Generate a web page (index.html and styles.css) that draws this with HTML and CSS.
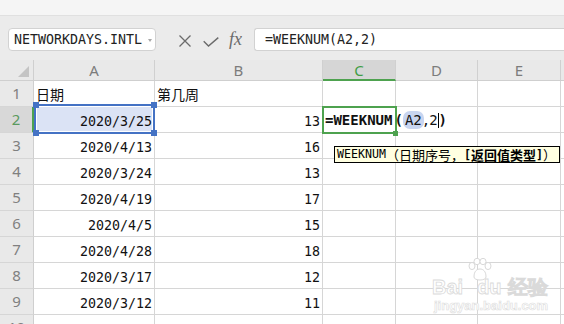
FILE: index.html
```html
<!DOCTYPE html>
<html>
<head>
<meta charset="utf-8">
<link rel="stylesheet" href="styles.css">
</head>
<body>
<div class="app">
  <div class="topband"></div>
  <div class="fbar">
    <div class="namebox"><span>NETWORKDAYS.INTL</span><span class="caret"></span></div>
    <svg class="ico-x" width="12" height="12" viewBox="0 0 12 12"><path d="M0.5 0.5 L11.5 11.5 M11.5 0.5 L0.5 11.5" stroke="#6b6b6b" stroke-width="1.3" fill="none"/></svg>
    <svg class="ico-ok" width="16" height="10" viewBox="0 0 16 10"><path d="M0.7 4.3 L5.5 9 L15.3 0.6" stroke="#6b6b6b" stroke-width="1.4" fill="none"/></svg>
    <span class="fx">fx</span>
    <div class="finput">=WEEKNUM(A2,2)</div>
  </div>
  <div class="sheet">
    <div class="corner"><svg width="34" height="20" viewBox="0 0 34 20"><path d="M29 6 L29 17 L18 17 Z" fill="#c4c4c4"/></svg></div>
    <div class="ch">A</div><div class="ch">B</div><div class="ch ch-act">C</div><div class="ch">D</div><div class="ch">E</div><div class="ch end"></div>

    <div class="rh">1</div><div class="c txt">日期</div><div class="c txt">第几周</div><div class="c"></div><div class="c"></div><div class="c"></div><div class="c end"></div>

    <div class="rh rh-act">2</div>
    <div class="c num selcell">2020/3/25<div class="sel"><i class="h tl"></i><i class="h tr"></i><i class="h bl"></i><i class="h br"></i></div></div>
    <div class="c num">13</div>
    <div class="c edcell">
      <div class="editor"><b>=WEEKNUM</b><b class="par">(</b><span class="ref">A2</span><span class="cm">,</span>2<span class="cursor"></span><b>)</b><i class="eh"></i></div>
      <div class="tip"><span class="lt">WEEKNUM</span><span class="cj">（日期序号，</span><b class="lt">[</b><b class="cj">返回值类型</b><b class="lt">]</b><span class="cj">）</span></div>
    </div>
    <div class="c"></div><div class="c"></div><div class="c end"></div>

    <div class="rh">3</div><div class="c num">2020/4/13</div><div class="c num">16</div><div class="c"></div><div class="c"></div><div class="c"></div><div class="c end"></div>
    <div class="rh">4</div><div class="c num">2020/3/24</div><div class="c num">13</div><div class="c"></div><div class="c"></div><div class="c"></div><div class="c end"></div>
    <div class="rh">5</div><div class="c num">2020/4/19</div><div class="c num">17</div><div class="c"></div><div class="c"></div><div class="c"></div><div class="c end"></div>
    <div class="rh">6</div><div class="c num">2020/4/5</div><div class="c num">15</div><div class="c"></div><div class="c"></div><div class="c"></div><div class="c end"></div>
    <div class="rh">7</div><div class="c num">2020/4/28</div><div class="c num">18</div><div class="c"></div><div class="c"></div><div class="c"></div><div class="c end"></div>
    <div class="rh">8</div><div class="c num">2020/3/17</div><div class="c num">12</div><div class="c"></div><div class="c"></div><div class="c"></div><div class="c end"></div>
    <div class="rh">9</div><div class="c num">2020/3/12</div><div class="c num">11</div><div class="c"></div><div class="c"></div><div class="c"></div><div class="c end"></div>
    <div class="rh">10</div><div class="c num">2020/4/14</div><div class="c num"></div><div class="c"></div><div class="c"></div><div class="c"></div><div class="c end"></div>
  </div>
  <div class="wm">
    <svg class="paw" width="26" height="24" viewBox="0 0 26 24"><g fill="#fff" stroke="#d9d9d9" stroke-width="1"><ellipse cx="6" cy="8" rx="3" ry="3.6"/><ellipse cx="11" cy="3.5" rx="3" ry="3.2"/><ellipse cx="17" cy="3.5" rx="3" ry="3.2"/><ellipse cx="22" cy="8" rx="3" ry="3.6"/><path d="M8 19 C8 13 11 11 14 11 C17 11 20 13 20 19 C20 23 8 23 8 19 Z"/></g></svg>
    <div class="wm1">Bai<span class="du">du</span>经验</div>
    <div class="wm2">jingyan.baidu.com</div>
  </div>
</div>
</body>
</html>
```

FILE: styles.css
```css
html, body {
  margin: 0;
  padding: 0;
  background: #ffffff;
}
.app {
  position: relative;
  width: 564px;
  height: 324px;
  overflow: hidden;
  background: #ffffff;
}
.topband {
  height: 15px;
  background: #f5f5f5;
  border-bottom: 1px solid #e0e0e0;
}
.fbar {
  height: 44px;
  box-sizing: border-box;
  padding: 12px 0 0 8px;
  background: #ebebeb;
  display: flex;
  align-items: flex-start;
}
.namebox {
  width: 148px;
  height: 23px;
  box-sizing: border-box;
  border: 1px solid #d2d2d2;
  border-radius: 4px;
  background: #ffffff;
  display: flex;
  align-items: center;
  padding-left: 5px;
  font-family: "DejaVu Sans Mono", "Liberation Mono", monospace;
  font-size: 13.3px;
  color: #222;
  position: relative;
}
.caret {
  position: absolute;
  right: 3px;
  top: 10px;
  width: 0;
  height: 0;
  border-left: 2.5px solid transparent;
  border-right: 2.5px solid transparent;
  border-top: 3px solid #a8a8a8;
}
.ico-x {
  margin: 7px 0 0 23px;
}
.ico-ok {
  margin: 9px 0 0 12px;
}
.fx {
  margin: 3px 0 0 10px;
  font-family: "Liberation Serif", serif;
  font-style: italic;
  font-size: 18px;
  line-height: 16px;
  color: #6b6b6b;
  width: 16px;
}
.finput {
  margin-left: 9px;
  flex: 1;
  height: 23px;
  box-sizing: border-box;
  border: 1px solid #d2d2d2;
  border-right: none;
  border-radius: 3px 0 0 3px;
  background: #ffffff;
  padding-left: 10px;
  font-family: "DejaVu Sans Mono", "Liberation Mono", monospace;
  font-size: 13.3px;
  line-height: 21px;
  color: #222;
}
.sheet {
  display: grid;
  grid-template-columns: 34px 121px 168px 73px 82px 83px 1fr;
  grid-template-rows: 21px repeat(10, 26px);
}
.sheet > div {
  box-sizing: border-box;
}
.corner {
  background: #e9e9e9;
  border-right: 1px solid #cfcfcf;
  border-bottom: 1px solid #cfcfcf;
}
.corner svg { display: block; }
.ch {
  background: #e9e9e9;
  border-right: 1px solid #d0d0d0;
  border-bottom: 1px solid #cfcfcf;
  text-align: center;
  font-family: "Noto Sans", "DejaVu Sans", sans-serif;
  font-size: 15px;
  line-height: 20px;
  color: #7c7c7c;
}
.ch.end { border-right: none; }
.ch-act {
  background: #d6d6d6;
  color: #3f9d45;
  border-bottom: 2px solid #4ea24f;
}
.rh {
  background: #e9e9e9;
  border-right: 1px solid #cfcfcf;
  border-bottom: 1px solid #d6d6d6;
  text-align: center;
  font-family: "Noto Sans", "DejaVu Sans", sans-serif;
  font-size: 15px;
  line-height: 25px;
  color: #808080;
}
.rh-act {
  background: #d8d8d8;
  color: #5a9a5e;
  border-right: 2px solid #4ea24f;
}
.c {
  background: #ffffff;
  border-right: 1px solid #d6d6d6;
  border-bottom: 1px solid #d6d6d6;
  font-family: "DejaVu Sans Mono", "Liberation Mono", monospace;
  font-size: 13.3px;
  line-height: 27px;
  color: #111;
  white-space: nowrap;
}
.c.end { border-right: none; }
.num {
  text-align: right;
  padding-right: 2px;
  padding-top: 1px;
}
.txt {
  font-family: "Noto Sans CJK SC", sans-serif;
  font-size: 14px;
  line-height: 26px;
  padding-left: 2px;
}
.selcell {
  position: relative;
  background: #dbe3f5;
}
.sel {
  position: absolute;
  left: 0;
  top: -3px;
  right: -1px;
  bottom: -2px;
  border: 2px solid #4472c4;
  box-shadow: inset 0 0 0 1px #ffffff;
}
.h {
  position: absolute;
  width: 6px;
  height: 6px;
  background: #4472c4;
}
.h.tl { left: -3px; top: -4px; }
.h.tr { right: -4px; top: -4px; }
.h.bl { left: -3px; bottom: -4px; }
.h.br { right: -4px; bottom: -4px; }
.edcell {
  position: relative;
  z-index: 3;
}
.editor {
  position: absolute;
  left: -1px;
  top: -1px;
  width: 75px;
  height: 28px;
  box-sizing: border-box;
  border: 2px solid #4ea24f;
  padding-left: 1px;
  white-space: nowrap;
  font-family: "DejaVu Sans Mono", "Liberation Mono", monospace;
  font-size: 14px;
  line-height: 25px;
  color: #111;
}
.editor b { font-weight: bold; }
.par { margin: 0 0 0 2px; }
.ref {
  background: #c8d5f0;
  border-radius: 7px;
  padding: 1px 2px;
  margin-left: 0;
}
.cm { margin: 0 -1px 0 -2px; }
.cursor {
  display: inline-block;
  width: 1px;
  height: 15px;
  background: #000;
  vertical-align: -3px;
}
.eh {
  position: absolute;
  right: -3px;
  bottom: -4px;
  width: 5px;
  height: 5px;
  background: #4ea24f;
}
.tip {
  position: absolute;
  left: 11px;
  top: 39px;
  width: 226px;
  height: 17px;
  box-sizing: border-box;
  border: 1px solid #000;
  background: #ffffe1;
  padding: 0 0 0 2px;
  white-space: nowrap;
  display: flex;
  align-items: center;
  color: #000;
}
.tip .lt {
  font-family: "DejaVu Sans Mono", monospace;
  font-size: 11.6px;
  line-height: 15px;
}
.tip .cj {
  font-family: "Noto Sans CJK SC", sans-serif;
  font-size: 13px;
  line-height: 15px;
}
.tip b { font-weight: bold; }
.wm {
  position: absolute;
  left: 430px;
  top: 258px;
  width: 110px;
  pointer-events: none;
}
.paw {
  position: absolute;
  left: 36px;
  top: 0;
}
.wm1 {
  position: absolute;
  left: 2px;
  top: 16px;
  font-family: "Liberation Sans", sans-serif;
  font-weight: bold;
  font-size: 20px;
  color: #ffffff;
  -webkit-text-stroke: 0.8px #dadada;
  white-space: nowrap;
}
.wm1 .du { margin-left: 14px; margin-right: 6px; }
.wm2 {
  position: absolute;
  left: 4px;
  top: 40px;
  font-family: "Liberation Sans", sans-serif;
  font-weight: bold;
  font-size: 13px;
  color: #ffffff;
  -webkit-text-stroke: 0.6px #dcdcdc;
  white-space: nowrap;
}
```
